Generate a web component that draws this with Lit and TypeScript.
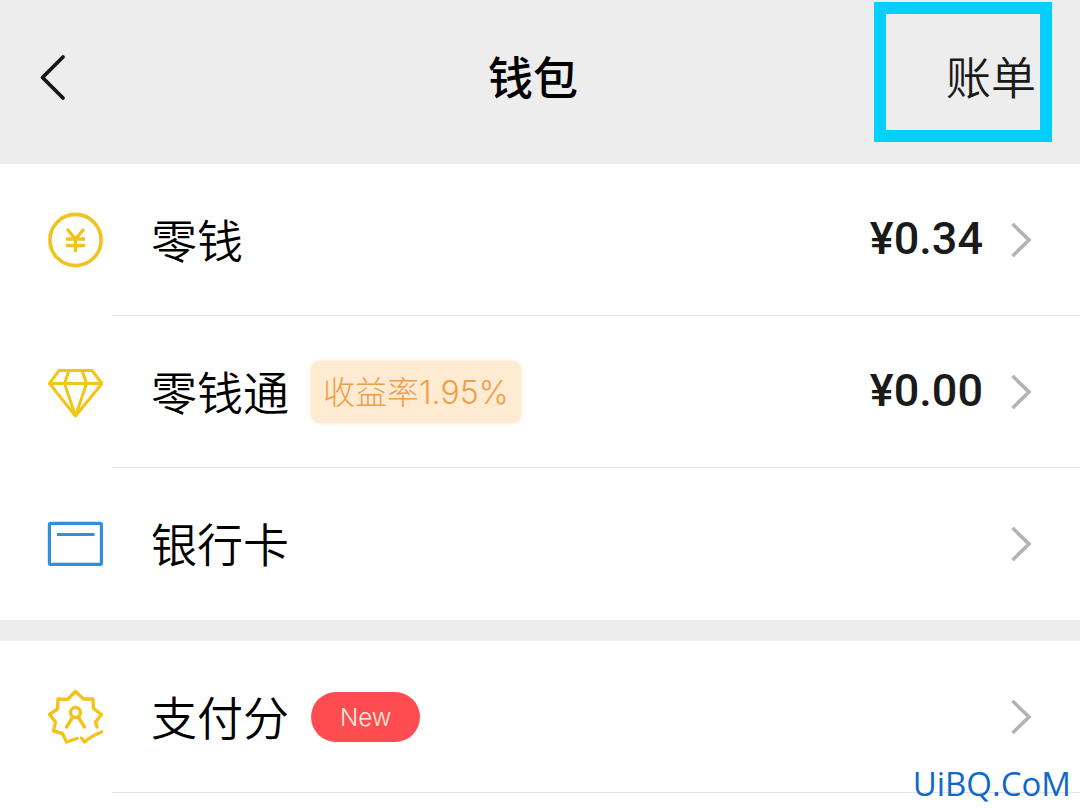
import { LitElement, html, css, svg } from "lit";
import { customElement, property } from "lit/decorators.js";

const icons: Record<string, unknown> = {
  coin: svg`<g stroke="#f0c420" stroke-width="3.6">
    <circle cx="28.500" cy="28" r="25.6"/>
    <path stroke-width="3.4" d="M20 17 L28.500 27 L37 17 M28.500 27 V40 M19 27 H38 M19 33.500 H38"/></g>`,
  diamond: svg`<g stroke="#f3c514" stroke-width="3" stroke-linejoin="round">
    <path d="M12 6.500 H45 L55 19.500 L28.500 52 L2.500 19.500 Z M2.500 19.500 H55 M22 6.500 L17.500 19.500 L28.500 52 L39.500 19.500 L35 6.500"/></g>`,
  card: svg`<g stroke="#2f8fdc" stroke-width="3.2" stroke-linejoin="round">
    <rect x="2.4" y="7.4" width="52" height="41" rx="1.5"/><path stroke-width="3" d="M10 18.500 H47.500"/></g>`,
  score: svg`<g stroke="#f3c31c" stroke-width="3.4" stroke-linejoin="round" stroke-linecap="round">
    <path d="M30 49.500 L19.500 53 L15.500 44.500 L6.500 42 L8.500 33 L2.500 25.500 L10.500 20 L11 10 L20.500 10.500 L28.500 2.500 L36.500 10 L46 10 L46.500 19.500 L54.500 25.500 L48.500 33 L50 38"/>
    <path d="M34.500 49 L37.500 53 Q45 46.500 54.500 43"/>
    <circle cx="28.500" cy="23.500" r="5"/><path d="M25.500 28.500 L19.500 38 M31.500 28.500 L37.500 38"/></g>`,
};

@customElement("wallet-row")
export class WalletRow extends LitElement {
  @property() icon = "coin";
  @property() label = "";
  @property() amount = "";
  @property() rate = "";
  @property() badge = "";
  @property({ type: Boolean }) divided = false;

  static styles = css`
    :host { display: block; }
    .row {
      position: relative;
      display: flex;
      align-items: center;
      height: 152px;
      box-sizing: border-box;
      padding: 0 48px 0 47px;
      color: #000;
      text-decoration: none;
    }
    .divided::after {
      content: "";
      position: absolute;
      left: 112px;
      right: 0;
      bottom: 0;
      height: 1px;
      background: #e3e3e3;
    }
    .icon { width: 56px; height: 56px; flex: none; margin-right: 48px; fill: none; }
    .label { padding-bottom: 4px; font-size: 46px; line-height: 64px; font-weight: 350; }
    .rate {
      margin-left: 22px;
      padding: 2px 12px 0;
      border-radius: 8px;
      background: #ffead2;
      color: #eda04a;
      font: 300 32px/60px Inter, "Noto Sans CJK SC", sans-serif;
      box-shadow: 0 0 4px #ffead2;
    }
    .badge {
      margin-left: 22px;
      padding: 2px 29px 0;
      border-radius: 25px;
      background: #ff4c50;
      color: #ffeede;
      font: 300 24px/48px Inter, sans-serif;
    }
    .amount { margin-left: auto; padding-bottom: 2px; color: #1a1a1a; font: 500 45px/64px Roboto, sans-serif; }
    .chevron { flex: none; width: 22px; height: 36px; margin-left: auto; fill: none; stroke: #b3b3b3; stroke-width: 3.6; }
    .amount + .chevron { margin-left: 27px; }
  `;

  render() {
    return html`<a class="row ${this.divided ? "divided" : ""}" href="#">
      <svg class="icon" viewBox="0 0 56 56" aria-hidden="true">${icons[this.icon]}</svg>
      <span class="label">${this.label}</span>
      ${this.rate ? html`<span class="rate">${this.rate}</span>` : ""}
      ${this.badge ? html`<span class="badge">${this.badge}</span>` : ""}
      ${this.amount ? html`<span class="amount">${this.amount}</span>` : ""}
      <svg class="chevron" viewBox="0 0 22 36" aria-hidden="true"><path d="M2.500 2 L19 18 L2.500 34"/></svg>
    </a>`;
  }
}

@customElement("app-root")
export class AppRoot extends LitElement {
  static styles = css`
    :host {
      position: relative;
      display: flex;
      flex-direction: column;
      height: 100vh;
      overflow: hidden;
      background: #fff;
      font-family: "Noto Sans CJK SC", sans-serif;
    }
    .header {
      flex: none;
      display: grid;
      grid-template-columns: 1fr auto 1fr;
      align-items: start;
      height: 164px;
      box-sizing: border-box;
      padding: 2px 28px 0 14px;
      background: #ededed;
    }
    .back {
      justify-self: start;
      width: 60px;
      height: 60px;
      margin-top: 46px;
      padding: 0;
      border: 0;
      background: none;
    }
    .back svg { display: block; width: 60px; height: 60px; fill: none; stroke: #161616; stroke-width: 3.8; stroke-linecap: round; stroke-linejoin: round; }
    .title { margin: 42px 0 0; font-size: 45px; line-height: 64px; font-weight: 500; }
    .bill {
      justify-self: end;
      height: 140px;
      box-sizing: border-box;
      padding: 30px 4px 0 60px;
      border: 12px solid #00cfff;
      color: #1a1a1a;
      font-size: 45px;
      line-height: 64px;
      font-weight: 350;
      text-decoration: none;
    }
    .group { flex: none; }
    .gap { flex: none; height: 21px; background: #ededed; }
    .mark {
      position: absolute;
      right: 9px;
      bottom: 3px;
      color: #1268c8;
      font: 400 33px/42px "Open Sans", sans-serif;
    }
  `;

  render() {
    return html`
      <header class="header">
        <button class="back" aria-label="返回">
          <svg viewBox="0 0 60 60"><path d="M49 9 L28.500 29.500 L49 50"/></svg>
        </button>
        <h1 class="title">钱包</h1>
        <a class="bill" href="#">账单</a>
      </header>
      <main>
        <section class="group">
          <wallet-row icon="coin" label="零钱" amount="¥0.34" divided></wallet-row>
          <wallet-row icon="diamond" label="零钱通" rate="收益率1.95%" amount="¥0.00" divided></wallet-row>
          <wallet-row icon="card" label="银行卡"></wallet-row>
        </section>
        <div class="gap"></div>
        <section class="group">
          <wallet-row icon="score" label="支付分" badge="New" divided></wallet-row>
        </section>
      </main>
      <span class="mark">UiBQ.CoM</span>
    `;
  }
}
